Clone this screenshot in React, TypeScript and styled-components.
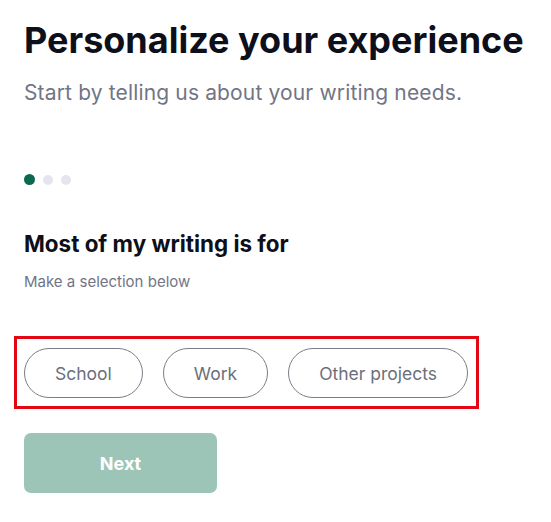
import React, { useState } from "react";
import styled, { createGlobalStyle } from "styled-components";

const Global = createGlobalStyle`
  html, body { margin: 0; padding: 0; background: #ffffff; }
  body { font-family: Inter, "Noto Sans", sans-serif; -webkit-font-smoothing: antialiased; }
`;

const Page = styled.main`
  display: flex;
  flex-direction: column;
  align-items: flex-start;
  padding: 18px 0 0 24px;
`;

const Title = styled.h1`
  margin: 0;
  font-size: 36px;
  line-height: 44px;
  font-weight: 700;
  color: #0d0f1a;
`;

const Subtitle = styled.p`
  margin: 17px 0 0;
  font-size: 21px;
  line-height: 28px;
  font-weight: 400;
  color: #717585;
  letter-spacing: 0.15px;
`;

const Dots = styled.div`
  display: flex;
  align-items: center;
  gap: 8px;
  height: 11px;
  margin-top: 67px;
`;

const Dot = styled.span<{ $active?: boolean }>`
  width: ${(p) => (p.$active ? 11 : 10)}px;
  height: ${(p) => (p.$active ? 11 : 10)}px;
  border-radius: 50%;
  background: ${(p) => (p.$active ? "#0b6a4e" : "#e4e5ef")};
`;

const Question = styled.h2`
  margin: 45px 0 0;
  font-size: 22.4px;
  line-height: 28px;
  font-weight: 700;
  color: #0d0f1a;
`;

const Hint = styled.p`
  margin: 14px 0 0;
  font-size: 15px;
  line-height: 20px;
  color: #717585;
`;

const Options = styled.div`
  display: flex;
  gap: 20px;
  margin: 44px 0 0 -10px;
  padding: 9px 8px 8px 7px;
  border: 3px solid #e30613;
`;

const Option = styled.button<{ $selected?: boolean }>`
  height: 50px;
  padding: 0 30px;
  border: 1px solid ${(p) => (p.$selected ? "#0b6a4e" : "#7a7d86")};
  border-radius: 25px;
  background: ${(p) => (p.$selected ? "#e8f3ef" : "#ffffff")};
  font-family: Inter, "Noto Sans", sans-serif;
  font-size: 17.5px;
  color: #6b6f7c;
  cursor: pointer;
`;

const Next = styled.button`
  margin-top: 24px;
  width: 193px;
  height: 60px;
  border: none;
  border-radius: 7px;
  background: #9cc5b8;
  color: #ffffff;
  font-family: Inter, "Noto Sans", sans-serif;
  font-size: 18px;
  font-weight: 700;
`;

export default function App() {
  const [selected, setSelected] = useState<string | null>(null);
  const options = ["School", "Work", "Other projects"];
  return (
    <>
      <Global />
      <Page>
        <Title>Personalize your experience</Title>
        <Subtitle>Start by telling us about your writing needs.</Subtitle>
        <Dots>
          <Dot $active />
          <Dot />
          <Dot />
        </Dots>
        <Question>Most of my writing is for</Question>
        <Hint>Make a selection below</Hint>
        <Options>
          {options.map((o) => (
            <Option key={o} $selected={selected === o} onClick={() => setSelected(o)}>
              {o}
            </Option>
          ))}
        </Options>
        <Next disabled={!selected}>Next</Next>
      </Page>
    </>
  );
}
